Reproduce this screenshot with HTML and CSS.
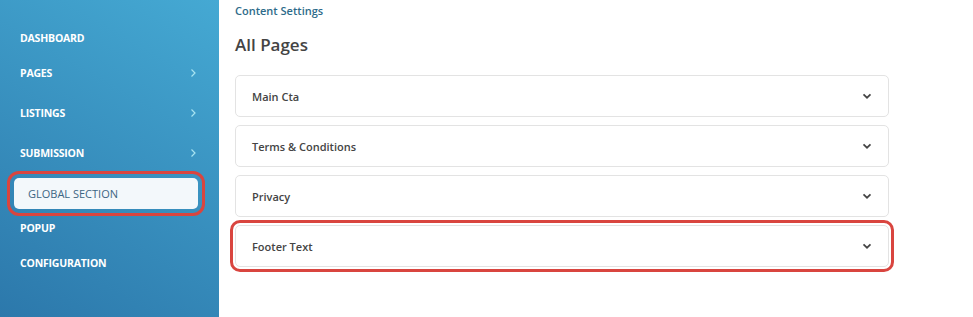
FILE: index.html
```html
<!DOCTYPE html>
<html lang="en">
<head>
  <meta charset="UTF-8" />
  <meta name="viewport" content="width=device-width, initial-scale=1.0" />
  <title>Content Settings - All Pages</title>
  <link rel="stylesheet" href="styles.css">
</head>
<body>
  <div class="layout">
    <aside class="sidebar">
      <ul class="menu">
        <li class="menu-item">DASHBOARD</li>
        <li class="menu-item has-sub">PAGES
          <svg class="arrow" viewBox="0 0 8 12"><path d="M2.5 2.5l3.5 3.5-3.5 3.5" /></svg>
        </li>
        <li class="menu-item has-sub">LISTINGS
          <svg class="arrow" viewBox="0 0 8 12"><path d="M2.5 2.5l3.5 3.5-3.5 3.5" /></svg>
        </li>
        <li class="menu-item has-sub">SUBMISSION
          <svg class="arrow" viewBox="0 0 8 12"><path d="M2.5 2.5l3.5 3.5-3.5 3.5" /></svg>
        </li>
        <li class="menu-item active"><span>GLOBAL SECTION</span></li>
        <li class="menu-item">POPUP</li>
        <li class="menu-item">CONFIGURATION</li>
      </ul>
    </aside>

    <main class="content">
      <div class="breadcrumb">Content Settings</div>
      <h1>All Pages</h1>

      <div class="accordion">
        <div class="acc-item">
          <span>Main Cta</span>
          <svg class="chev" viewBox="0 0 10 6"><path d="M1.5 1.3l3.5 3.4 3.5-3.4" /></svg>
        </div>
        <div class="acc-item">
          <span>Terms &amp; Conditions</span>
          <svg class="chev" viewBox="0 0 10 6"><path d="M1.5 1.3l3.5 3.4 3.5-3.4" /></svg>
        </div>
        <div class="acc-item">
          <span>Privacy</span>
          <svg class="chev" viewBox="0 0 10 6"><path d="M1.5 1.3l3.5 3.4 3.5-3.4" /></svg>
        </div>
        <div class="acc-item marked">
          <span>Footer Text</span>
          <svg class="chev" viewBox="0 0 10 6"><path d="M1.5 1.3l3.5 3.4 3.5-3.4" /></svg>
        </div>
      </div>
    </main>
  </div>
</body>
</html>
```

FILE: styles.css
```css
body {
  margin: 0;
  font-family: 'Open Sans', 'Liberation Sans', sans-serif;
  color: #444;
  background: #fff;
}

.layout {
  display: flex;
  height: 317px;
}

.sidebar {
  width: 219px;
  flex-shrink: 0;
  background: linear-gradient(30deg, #2c78ab, #45a9d3);
}

.menu {
  list-style: none;
  margin: 0;
  padding: 29px 0 0;
}

.menu-item {
  display: flex;
  align-items: center;
  justify-content: space-between;
  height: 18px;
  margin-bottom: 17px;
  padding: 0 22px 0 20px;
  color: #fff;
  font-size: 10.5px;
  font-weight: 700;
  letter-spacing: -0.2px;
}

.menu-item.has-sub {
  margin-bottom: 22px;
}

.menu-item.has-sub:nth-child(4) {
  margin-bottom: 16px;
}

.arrow {
  width: 8px;
  height: 12px;
  fill: none;
  stroke: #a7e3f1;
  stroke-width: 1.2;
}

.menu-item.active {
  padding: 0 21px 0 14px;
  height: 31px;
  margin-bottom: 10px;
}

.menu-item.active span {
  flex: 1;
  display: flex;
  align-items: center;
  height: 31px;
  padding-left: 14px;
  background: #f3f8fb;
  border-radius: 5px;
  color: #3d6683;
  font-size: 11px;
  font-weight: 500;
  letter-spacing: 0;
  outline: 3px solid #d9453f;
  outline-offset: 4px;
}

.content {
  flex: 1;
  padding: 4px 0 0 16px;
}

.breadcrumb {
  font-size: 11px;
  font-weight: 600;
  color: #2d6b8a;
  line-height: 14px;
}

h1 {
  margin: 16px 0 0;
  font-size: 17px;
  font-weight: 600;
  color: #444;
  line-height: 22px;
}

.accordion {
  display: flex;
  flex-direction: column;
  gap: 8px;
  width: 654px;
  margin-top: 19px;
}

.acc-item {
  box-sizing: border-box;
  display: flex;
  align-items: center;
  justify-content: space-between;
  height: 42px;
  padding: 0 16px 0 16px;
  border: 1px solid #e3e3e3;
  border-radius: 5px;
  font-size: 11px;
  font-weight: 600;
  color: #444;
}

.chev {
  width: 10px;
  height: 6px;
  fill: none;
  stroke: #444;
  stroke-width: 1.7;
}

.acc-item.marked {
  outline: 3px solid #d9453f;
  outline-offset: 2px;
}
```
